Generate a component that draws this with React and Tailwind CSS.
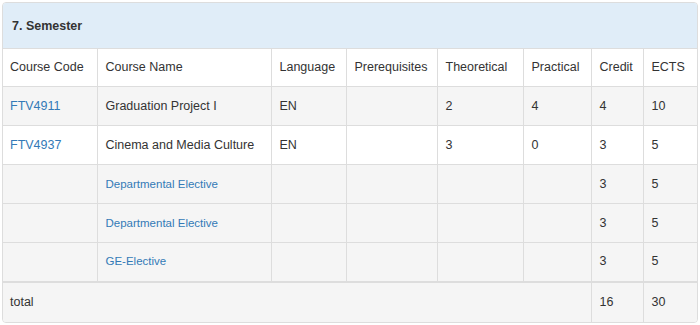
import React from 'react';

const columns = [
  { label: 'Course Code', width: 94 },
  { label: 'Course Name', width: 174 },
  { label: 'Language', width: 75 },
  { label: 'Prerequisites', width: 91 },
  { label: 'Theoretical', width: 86 },
  { label: 'Practical', width: 68 },
  { label: 'Credit', width: 52 },
  { label: 'ECTS', width: 54 },
];

const courses = [
  { code: 'FTV4911', name: 'Graduation Project I', lang: 'EN', pre: '', t: '2', p: '4', credit: '4', ects: '10' },
  { code: 'FTV4937', name: 'Cinema and Media Culture', lang: 'EN', pre: '', t: '3', p: '0', credit: '3', ects: '5' },
  { code: '', name: 'Departmental Elective', nameLink: true, lang: '', pre: '', t: '', p: '', credit: '3', ects: '5' },
  { code: '', name: 'Departmental Elective', nameLink: true, lang: '', pre: '', t: '', p: '', credit: '3', ects: '5' },
  { code: '', name: 'GE-Elective', nameLink: true, lang: '', pre: '', t: '', p: '', credit: '3', ects: '5' },
];

function Cell({ children, first }) {
  return (
    <td className={`h-[39px] px-2 align-middle border-t border-[#dddddd] ${first ? 'pl-[7px]' : 'border-l'}`}>
      {children}
    </td>
  );
}

export default function App() {
  return (
    <div className="p-[2px] bg-white" style={{ fontFamily: '"Liberation Sans", Arial, sans-serif' }}>
      <div className="w-[696px] border border-[#dddddd] rounded-[4px] overflow-hidden text-[12.5px] text-[#333333]">
        <div className="h-[45px] flex items-center px-[9px] bg-[#e0edf8] font-bold pt-px">
          7. Semester
        </div>
        <table className="w-full table-fixed border-collapse">
          <colgroup>
            {columns.map((c) => (
              <col key={c.label} style={{ width: c.width }} />
            ))}
          </colgroup>
          <thead>
            <tr className="bg-white">
              {columns.map((c, i) => (
                <td
                  key={c.label}
                  className={`h-[38px] px-2 align-middle border-t border-[#dddddd] ${i === 0 ? 'pl-[7px]' : 'border-l'}`}
                >
                  {c.label}
                </td>
              ))}
            </tr>
          </thead>
          <tbody>
            {courses.map((c, i) => (
              <tr key={i} className={i === 1 ? 'bg-white' : 'bg-[#f5f5f5]'}>
                <Cell first>
                  {c.code && <a className="text-[#337ab7]">{c.code}</a>}
                </Cell>
                <Cell>
                  {c.nameLink ? <a className="text-[#337ab7] text-[11.5px]">{c.name}</a> : c.name}
                </Cell>
                <Cell>{c.lang}</Cell>
                <Cell>{c.pre}</Cell>
                <Cell>{c.t}</Cell>
                <Cell>{c.p}</Cell>
                <Cell>{c.credit}</Cell>
                <Cell>{c.ects}</Cell>
              </tr>
            ))}
            <tr className="bg-[#f5f5f5]">
              <td colSpan={6} className="h-[40px] pl-[7px] pr-2 align-middle border-t-2 border-[#dddddd]">
                total
              </td>
              <td className="h-[40px] px-2 align-middle border-t-2 border-l border-[#dddddd]">16</td>
              <td className="h-[40px] px-2 align-middle border-t-2 border-l border-[#dddddd]">30</td>
            </tr>
          </tbody>
        </table>
      </div>
    </div>
  );
}
